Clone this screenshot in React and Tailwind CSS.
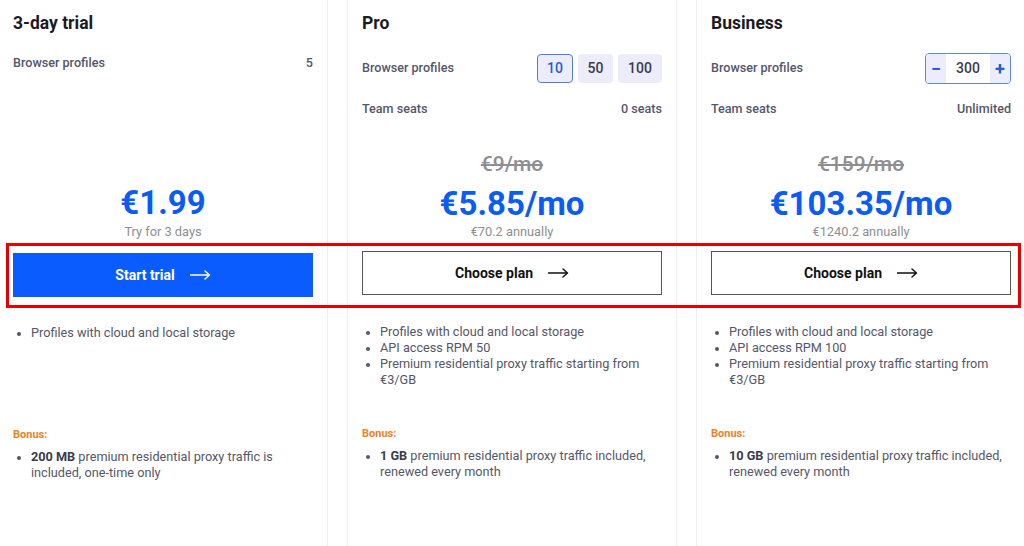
import React from "react";

const font = { fontFamily: "Roboto, 'Noto Sans', sans-serif" };

function Arrow({ color }) {
  return (
    <svg width="21" height="10" viewBox="0 0 21 10" fill="none">
      <path d="M0 5h19M15 1l4.5 4L15 9" stroke={color} strokeWidth="1.4" strokeLinecap="round" strokeLinejoin="round" />
    </svg>
  );
}

function Bullet({ children }) {
  return (
    <li className="flex">
      <span className="w-[18px] shrink-0 flex pt-[7px]">
        <span className="ml-[4px] w-[4px] h-[4px] rounded-full bg-[#55566b]" />
      </span>
      <span>{children}</span>
    </li>
  );
}

function Row({ label, children }) {
  return (
    <div className="flex items-center justify-between">
      <span className="text-[12.6px] font-medium text-[#55566b]">{label}</span>
      {children}
    </div>
  );
}

function Card({ plan }) {
  return (
    <div className="w-[330px] shrink-0 border-x border-[#eeeef0] px-[14px] pt-[11px] h-[546px] bg-white">
      <div className="h-[134px]">
        <h2 className="text-[17.5px] leading-[24px] font-bold text-[#1b1b1f]">{plan.name}</h2>
        <div className={"flex flex-col " + plan.rowsClass}>{plan.rows}</div>
      </div>
      <div className="h-[95px] flex flex-col items-center justify-end">
        {plan.old && (
          <div className="mb-[8px] text-[21px] leading-[24px] font-medium text-[#8e8e93] line-through decoration-[1.5px]">{plan.old}</div>
        )}
        <div className="text-[33px] leading-[40px] font-bold text-[#0b5cf0]">{plan.price}</div>
        <div className={"text-[12.8px] leading-[16px] text-[#8e8e93] " + (plan.old ? "" : "mt-[1px]")}>{plan.sub}</div>
      </div>
      {plan.primary ? (
        <button className="mt-[13px] w-full h-[44px] bg-[#0a5cff] text-white text-[14px] font-bold flex items-center justify-center gap-[15px]">
          <span>{plan.cta}</span>
          <Arrow color="#ffffff" />
        </button>
      ) : (
        <button className="mt-[11px] w-full h-[44px] border border-[#555555] bg-white text-[#111111] text-[14px] font-bold flex items-center justify-center gap-[15px]">
          <span>{plan.cta}</span>
          <Arrow color="#111111" />
        </button>
      )}
      <ul className={(plan.primary ? "mt-[28px] " : "mt-[29px] ") + "h-[97px] text-[12.7px] leading-[16px] text-[#55566b]"}>
        {plan.features.map((f) => (
          <Bullet key={f}>{f}</Bullet>
        ))}
      </ul>
      <div className="mt-[6px] text-[11px] leading-[14px] font-bold text-[#f0811e]">Bonus:</div>
      <ul className="mt-[7px] text-[12.7px] leading-[16px] text-[#55566b]">
        <Bullet>
          <b className="font-bold text-[#3a3b4d]">{plan.bonusBold}</b> {plan.bonus}
        </Bullet>
      </ul>
    </div>
  );
}

const plans = [
  {
    name: "3-day trial",
    rowsClass: "mt-[18px]",
    rows: [
      <Row key="bp" label="Browser profiles">
        <span className="text-[12.6px] font-medium text-[#55566b] leading-[20px]">5</span>
      </Row>,
    ],
    price: "€1.99",
    sub: "Try for 3 days",
    cta: "Start trial",
    primary: true,
    features: ["Profiles with cloud and local storage"],
    bonusBold: "200 MB",
    bonus: "premium residential proxy traffic is included, one-time only",
  },
  {
    name: "Pro",
    rowsClass: "mt-[19px] gap-[16px]",
    rows: [
      <Row key="bp" label="Browser profiles">
        <div className="flex gap-[5px]">
          <span className="h-[29px] w-[36px] rounded-[4px] border border-[#4f7fd3] bg-[#ececfa] text-[#1f5fd0] text-[14px] font-medium flex items-center justify-center">10</span>
          <span className="h-[29px] w-[35px] rounded-[4px] bg-[#ececfa] text-[#3a3b4d] text-[14px] font-medium flex items-center justify-center">50</span>
          <span className="h-[29px] w-[44px] rounded-[4px] bg-[#ececfa] text-[#3a3b4d] text-[14px] font-medium flex items-center justify-center">100</span>
        </div>
      </Row>,
      <Row key="ts" label="Team seats">
        <span className="text-[12.6px] font-medium text-[#55566b] leading-[20px]">0 seats</span>
      </Row>,
    ],
    old: "€9/mo",
    price: "€5.85/mo",
    sub: "€70.2 annually",
    cta: "Choose plan",
    features: [
      "Profiles with cloud and local storage",
      "API access RPM 50",
      "Premium residential proxy traffic starting from €3/GB",
    ],
    bonusBold: "1 GB",
    bonus: "premium residential proxy traffic included, renewed every month",
  },
  {
    name: "Business",
    rowsClass: "mt-[18px] gap-[15px]",
    rows: [
      <Row key="bp" label="Browser profiles">
        <div className="h-[31px] w-[86px] flex rounded-[4px] border border-[#5b8ad8] overflow-hidden">
          <span className="w-[20px] bg-[#ececfa] text-[#1f5fd0] text-[18px] font-bold flex items-center justify-center">−</span>
          <span className="flex-1 bg-white text-[#3a3b4d] text-[14px] font-medium flex items-center justify-center">300</span>
          <span className="w-[20px] bg-[#ececfa] text-[#1f5fd0] text-[18px] font-bold flex items-center justify-center">+</span>
        </div>
      </Row>,
      <Row key="ts" label="Team seats">
        <span className="text-[12.6px] font-medium text-[#55566b] leading-[20px]">Unlimited</span>
      </Row>,
    ],
    old: "€159/mo",
    price: "€103.35/mo",
    sub: "€1240.2 annually",
    cta: "Choose plan",
    features: [
      "Profiles with cloud and local storage",
      "API access RPM 100",
      "Premium residential proxy traffic starting from €3/GB",
    ],
    bonusBold: "10 GB",
    bonus: "premium residential proxy traffic included, renewed every month",
  },
];

export default function App() {
  return (
    <div className="relative w-[1024px] h-[546px] overflow-hidden bg-white" style={font}>
      <div className="flex gap-[19px] -ml-[2px] w-[1028px]">
        {plans.map((p) => (
          <Card key={p.name} plan={p} />
        ))}
      </div>
      {/* highlight around the CTA row */}
      <div className="absolute left-[6px] top-[243px] w-[1015px] h-[65px] border-[3px] border-[#e60000] pointer-events-none" />
    </div>
  );
}
